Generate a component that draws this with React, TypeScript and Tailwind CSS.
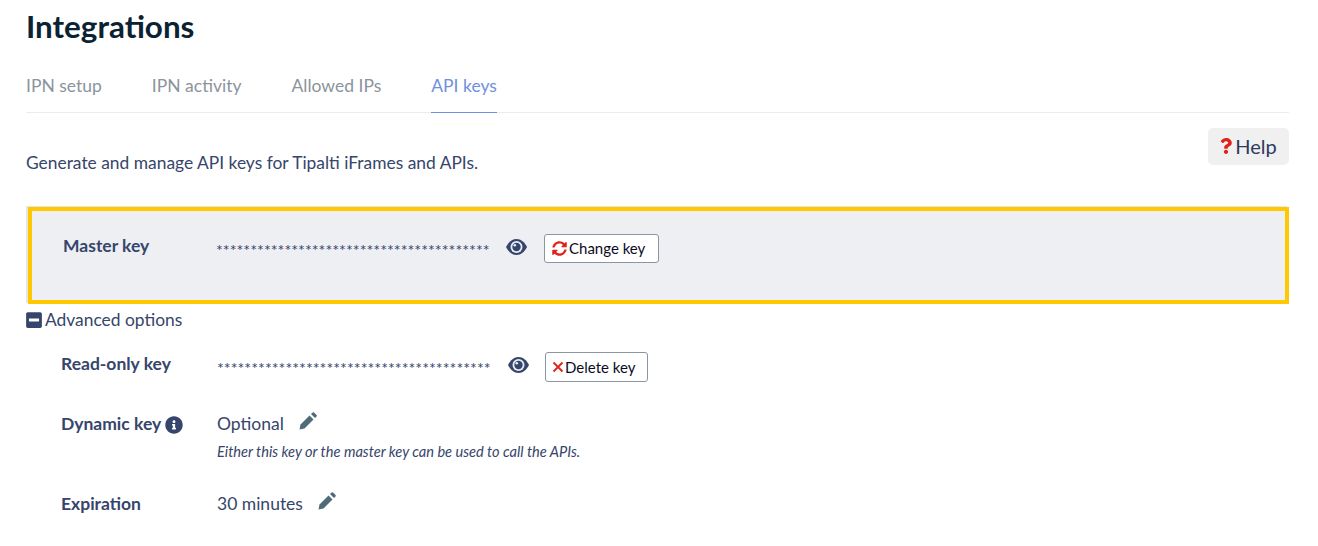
import { FaInfoCircle, FaMinusSquare, FaQuestion, FaSyncAlt } from 'react-icons/fa'

const TABS = ['IPN setup', 'IPN activity', 'Allowed IPs', 'API keys']
const MASKED = '*'.repeat(40)

function EditIcon() {
  return (
    <svg viewBox="0 0 18 18" className="mb-[6px] h-[18px] w-[18px] text-[#4f6b78]" fill="currentColor">
      <path d="M0.5 17.5l1-5 9-9 4 4-9 9z" />
      <path d="M12 2l1.3-1.3a1.4 1.4 0 0 1 2 0l2 2a1.4 1.4 0 0 1 0 2L16 6z" />
    </svg>
  )
}

function EyeIcon({ className }: { className: string }) {
  return (
    <svg viewBox="0 0 21 16" className={`h-[16px] w-[21px] text-[#36456b] ${className}`}>
      <path fill="currentColor" d="M0 8C2.5 3.2 6 0 10.5 0S18.5 3.2 21 8c-2.5 4.8-6 8-10.5 8S2.5 12.8 0 8z" />
      <circle cx="10.5" cy="8" r="6" fill="#e9edf5" />
      <circle cx="10.5" cy="8" r="4.2" fill="currentColor" />
      <circle cx="8.8" cy="6.3" r="1.3" fill="#e9edf5" />
    </svg>
  )
}

export default function App() {
  return (
    <div className="h-[546px] w-[1318px] overflow-hidden bg-white pl-[26px] pr-[29px] font-['Lato',sans-serif] text-[#36456b]">
      {/* Header */}
      <h1 className="pt-[8px] text-[31.4px] font-bold leading-[36px] text-[#0b2233]">Integrations</h1>

      {/* Tabs */}
      <div className="mt-[23px] flex h-[46px] gap-[50px] border-b border-[#ececec]">
        {TABS.map((tab) => (
          <div
            key={tab}
            className={
              tab === 'API keys'
                ? 'h-[46px] border-b border-[#6f8fe0] pt-[6px] text-[17.5px] leading-[26px] text-[#6f8fe0]'
                : 'h-[46px] pt-[6px] text-[17.5px] leading-[26px] text-[#8a949c]'
            }
          >
            {tab}
          </div>
        ))}
      </div>

      {/* Description + help */}
      <div className="mt-[15px] flex h-[37px] items-start justify-between">
        <p className="pt-[22px] text-[17.4px] leading-[26px]">Generate and manage API keys for Tipalti iFrames and APIs.</p>
        <button className="flex h-[37px] w-[81px] items-center justify-center gap-[3px] rounded-[5px] bg-[#f0f0f0] pb-[2px] text-[20px] text-[#2d3a5c]">
          <FaQuestion className="h-[16px] w-[12px] text-[#e0231a]" />
          Help
        </button>
      </div>

      {/* Master key */}
      <div className="mt-[42px] ml-[2px] flex h-[97px] items-start border-[4px] border-[#ffc800] bg-[#eeeff3] pt-[22px] pl-[31px] shadow-[-2px_-1px_0_#e6e6e6]">
        <div className="w-[153px] text-[17.5px] font-bold leading-[26px]">Master key</div>
        <div className="mt-[1px] flex h-[28px] items-center">
          <span className="w-[272px] pt-[3px] text-[16.1px] leading-[20px] whitespace-nowrap">{MASKED}</span>
          <EyeIcon className="ml-[18px] mb-[3px]" />
          <button className="ml-[17px] flex h-[29px] w-[115px] items-center gap-[2px] rounded-[3px] border border-[#8a96a3] bg-white pl-[7px] text-[15px] text-[#0b0b1e]">
            <FaSyncAlt className="h-[15px] w-[15px] text-[#e0231a]" />
            Change key
          </button>
        </div>
      </div>

      {/* Advanced options */}
      <div className="mt-[5px] flex h-[22px] items-center gap-[3px] text-[17.4px] leading-[22px]">
        <FaMinusSquare className="h-[18px] w-[16px]" />
        Advanced options
      </div>

      <div className="mt-[21px] ml-[35px]">
        <div className="flex h-[30px] items-start">
          <div className="w-[156px] text-[17.5px] font-bold leading-[24px]">Read-only key</div>
          <span className="w-[273px] pt-[6px] text-[16.1px] leading-[20px] whitespace-nowrap">{MASKED}</span>
          <EyeIcon className="ml-[18px] mt-[5px]" />
          <button className="ml-[16px] flex h-[30px] w-[103px] items-center gap-[1px] rounded-[3px] border border-[#8a96a3] bg-white pl-[6px] text-[15px] text-[#0b0b1e]">
            <svg viewBox="0 0 12 12" className="h-[12px] w-[12px] text-[#e0231a]" fill="none" stroke="currentColor" strokeWidth="1.8">
              <path d="M1.5 1.5l9 9M10.5 1.5l-9 9" />
            </svg>
            Delete key
          </button>
        </div>

        <div className="mt-[29px] flex items-start">
          <div className="flex w-[156px] items-center gap-[4px] text-[17.5px] font-bold leading-[26px]">
            Dynamic key
            <FaInfoCircle className="mt-[2px] h-[18px] w-[18px]" />
          </div>
          <div>
            <div className="flex h-[26px] items-center gap-[15px] text-[17.5px] leading-[26px]">
              Optional
              <EditIcon />
            </div>
            <p className="mt-[5px] text-[14.6px] italic leading-[20px]">Either this key or the master key can be used to call the APIs.</p>
          </div>
        </div>

        <div className="mt-[29px] flex items-start">
          <div className="w-[156px] text-[17.5px] font-bold leading-[26px]">Expiration</div>
          <div className="flex h-[26px] items-center gap-[15px] text-[17.5px] leading-[26px]">
            30 minutes
            <EditIcon />
          </div>
        </div>
      </div>
    </div>
  )
}
